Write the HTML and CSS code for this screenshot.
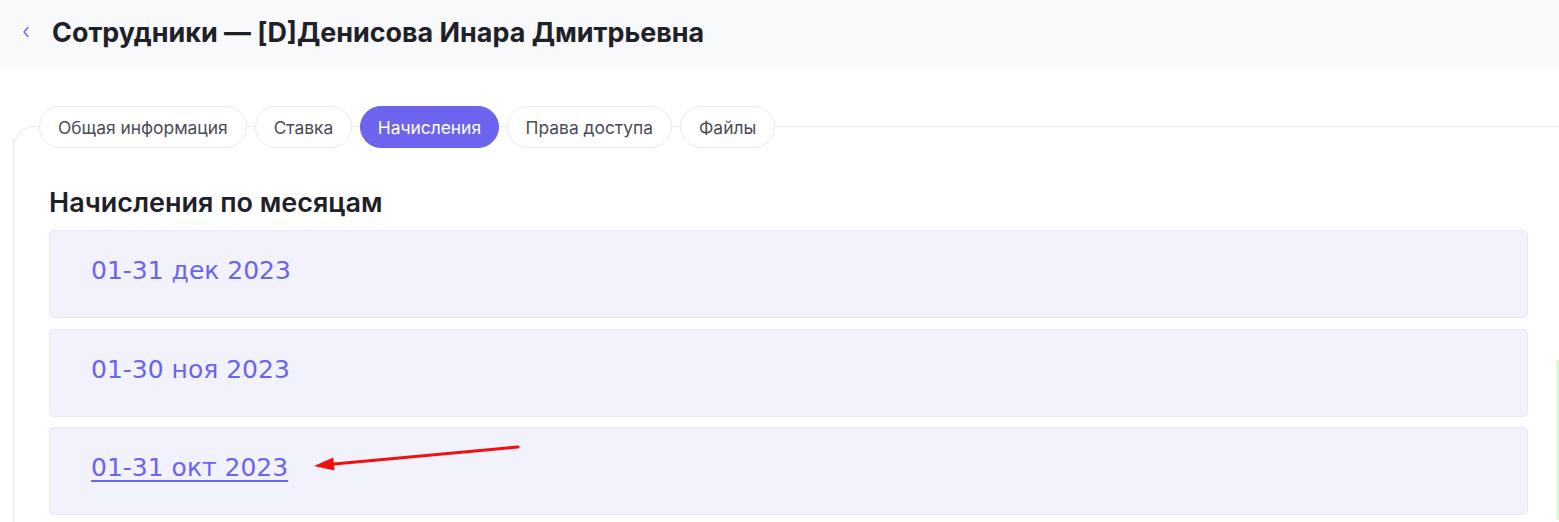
FILE: index.html
```html
<!DOCTYPE html>
<html lang="ru">
<head>
<meta charset="utf-8">
<title>Сотрудники</title>
<link rel="stylesheet" href="styles.css">
</head>
<body>
<header class="topbar">
  <a class="back" href="#"><svg width="10" height="12" viewBox="0 0 10 12"><path d="M7 1.5 L3 6 L7 10.5" fill="none" stroke="#6c63f0" stroke-width="1.4" stroke-linecap="round" stroke-linejoin="round"/></svg></a>
  <h1 class="title">Сотрудники — [D]Денисова Инара Дмитрьевна</h1>
</header>
<main class="main">
  <div class="card">
    <nav class="tabs">
      <span class="tab">Общая информация</span>
      <span class="tab">Ставка</span>
      <span class="tab active">Начисления</span>
      <span class="tab">Права доступа</span>
      <span class="tab">Файлы</span>
    </nav>
    <h2 class="section">Начисления по месяцам</h2>
    <div class="list">
      <div class="item"><a href="#" class="period">01-31 дек 2023</a></div>
      <div class="item"><a href="#" class="period">01-30 ноя 2023</a></div>
      <div class="item"><a href="#" class="period hover">01-31 окт 2023</a>
        <svg class="arrow" width="240" height="40" viewBox="0 0 240 40"><path d="M218 7 L34 24" stroke="#f01010" stroke-width="3.2" stroke-linecap="round"/><path d="M14 26 L33.3 17.6 L34.5 30.6 Z" fill="#f01010"/></svg>
      </div>
    </div>
  </div>
  <div class="edge"></div>
</main>
</body>
</html>
```
FILE: styles.css
```css
* { box-sizing: border-box; }
html, body { margin: 0; padding: 0; background: #fff; overflow: hidden; }
body { font-family: Inter, "Noto Sans", sans-serif; width: 1559px; height: 522px; }
.topbar {
  height: 70px;
  background: #f8f9fb;
  display: flex;
  align-items: center;
  padding-left: 21px;
  padding-bottom: 6px;
}
.back { display: flex; width: 31px; }
.title {
  margin: 0;
  font-size: 26.9px;
  font-weight: 700;
  color: #1f2129;
}
.main { position: relative; padding: 36px 0 0 13px; height: 452px; }
.card {
  position: relative;
  padding: 0 30px 0 25px;
}
.card::before {
  content: "";
  position: absolute;
  left: 20px; right: 0; top: 20px;
  border-top: 1px solid #e6eaf3;
}
.card::after {
  content: "";
  position: absolute;
  left: 0; top: 20px; width: 24px; height: 24px;
  border-top: 1px solid #e9ecf3;
  border-left: 1px solid #e9ecf3;
  border-top-left-radius: 22px;
}
.main::before {
  content: "";
  position: absolute;
  left: 13px; top: 70px; bottom: 0;
  border-left: 1px solid #e9ecf3;
}
.tabs { position: relative; z-index: 1; display: flex; gap: 8px; margin-left: 1px; }
.tab {
  height: 42px;
  display: flex;
  align-items: center;
  padding: 0 18px;
  border: 1px solid #e8ebf3;
  border-radius: 21px;
  background: #fff;
  font-size: 17.4px;
  color: #4b4c57;
}
.tab.active { background: #6c63ef; border-color: #6c63ef; color: #fff; padding: 0 16.5px; }
.section {
  margin: 40px 0 0 11px;
  font-size: 27px;
  font-weight: 600;
  color: #1f2129;
  line-height: 30px;
}
.list { display: flex; flex-direction: column; gap: 10.5px; margin: 12px 0 0 11px; width: 1479px; }
.item {
  position: relative;
  height: 88px;
  flex: none;
  background: #f2f2fd;
  border: 1px solid #e7e7fa;
  border-radius: 5px;
  padding: 25px 0 0 41px;
}
.period {
  font-family: "DejaVu Sans", Verdana, sans-serif;
  font-size: 25px;
  color: #6c63ef;
  text-decoration: none;
  line-height: 30px;
}
.period.hover { text-decoration: underline; text-underline-offset: 4px; text-decoration-thickness: 2px; }
.arrow { position: absolute; left: 250px; top: 12px; }
.edge {
  position: absolute;
  right: 0; top: 290px; width: 4px; height: 160px;
  background: linear-gradient(90deg, rgba(200,240,190,0), #cdf3c3);
}
```
